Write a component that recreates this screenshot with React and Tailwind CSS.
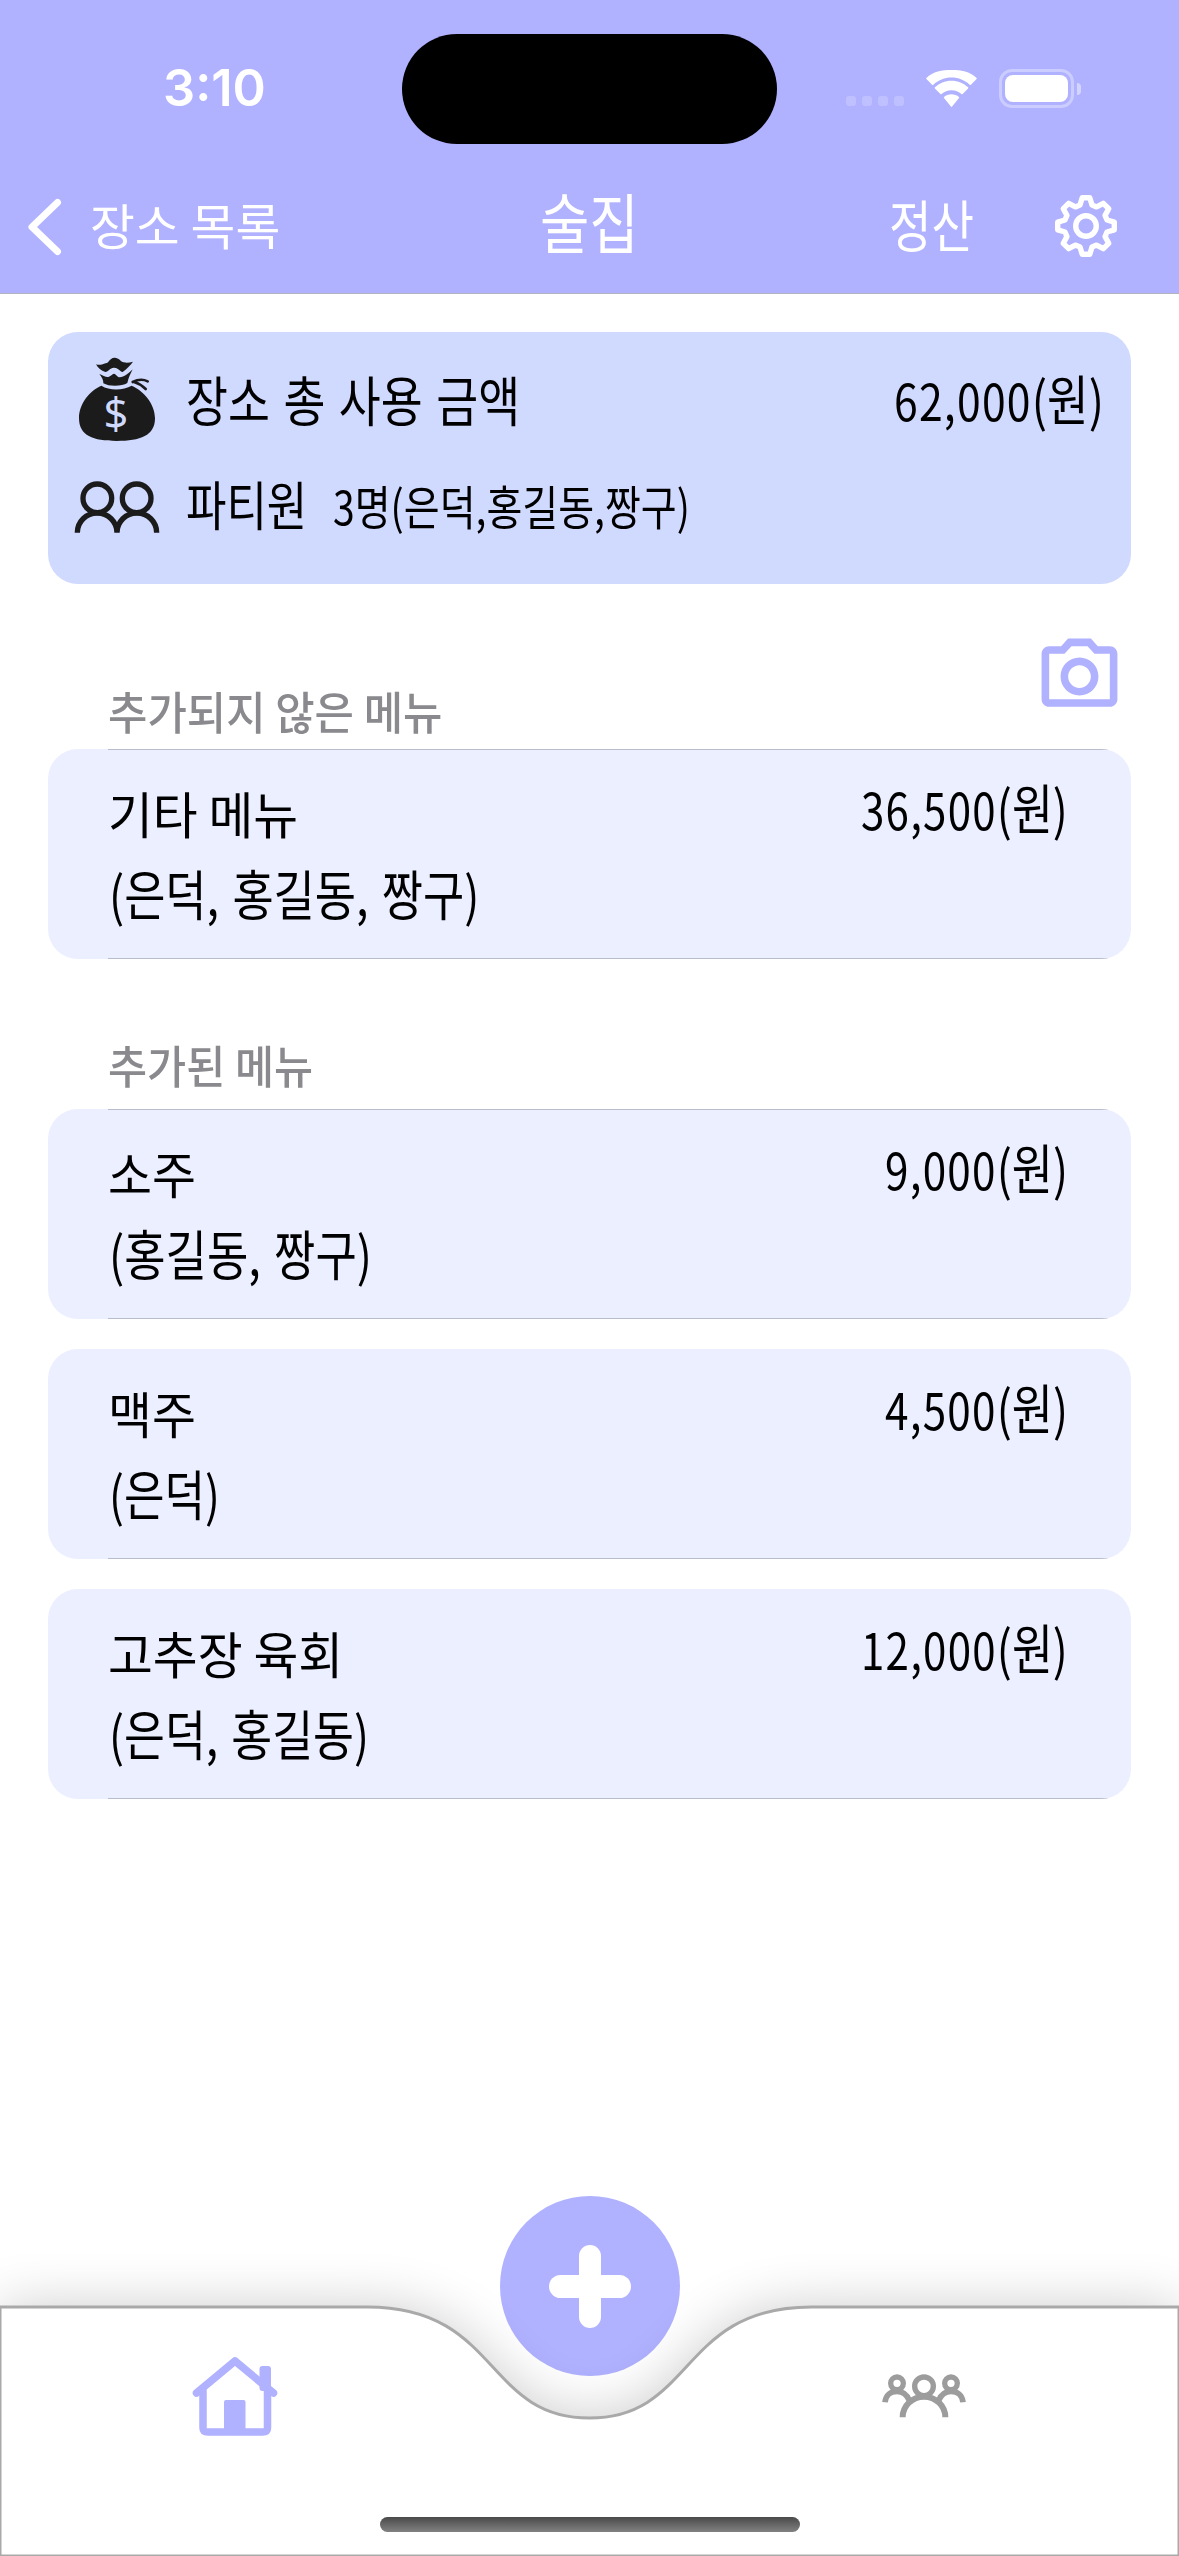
import React, { useLayoutEffect, useRef, useState } from "react";
import { MdOutlineCameraAlt } from "react-icons/md";

// One line of text condensed horizontally so that it fills exactly `width` pixels.
function Condensed({ width, className = "", children }) {
  const ref = useRef(null);
  const [scale, setScale] = useState(1);
  useLayoutEffect(() => {
    setScale(width / ref.current.offsetWidth);
  }, [width]);
  return (
    <span className={"block whitespace-pre shrink-0 " + className} style={{ width }}>
      <span ref={ref} className="inline-block origin-left" style={{ transform: `scaleX(${scale})` }}>
        {children}
      </span>
    </span>
  );
}

function Price({ width, amount, className = "" }) {
  return (
    <Condensed width={width} className={"text-[54px] " + className}>
      <span className="text-[51px] tracking-[1.5px]">{amount}</span>(원)
    </Condensed>
  );
}

function Wifi() {
  return (
    <svg width="51" height="37" viewBox="0 0 51 37" fill="#fff">
      <path d="M25.5 7.6c7 0 13.4 2.7 18.2 7.2.4.3.9.3 1.2 0l5.7-5.800c.3-.3.3-.8 0-1.100C43.900 1.500 35 0 25.500 0S7.100 1.500.4 7.900c-.3.3-.3.8 0 1.100l5.700 5.800c.3.3.8.3 1.200 0C12.100 10.300 18.500 7.600 25.500 7.600z" />
      <path d="M25.500 20.200c3.800 0 7.300 1.400 9.900 3.800.4.3.9.3 1.200 0l5.500-5.600c.3-.3.3-.8 0-1.100-4.400-4.100-10.200-6.600-16.600-6.600s-12.200 2.500-16.600 6.600c-.3.3-.3.8 0 1.100l5.500 5.600c.3.3.8.3 1.200 0 2.600-2.400 6.100-3.800 9.900-3.800z" />
      <path d="M33 28.100c.3-.3.3-.8 0-1.100-2-1.800-4.600-2.800-7.500-2.800s-5.500 1-7.500 2.800c-.3.3-.3.8 0 1.100l6.900 8.500c.3.4.9.4 1.200 0z" />
    </svg>
  );
}

function Gear() {
  const tooth = [[-6, -21], [-3.8, -28.3], [3.8, -28.3], [6, -21]];
  const points = Array.from({ length: 8 }, (_, k) => {
    const a = (k * Math.PI) / 4;
    return tooth
      .map(([x, y]) => `${(x * Math.cos(a) - y * Math.sin(a)).toFixed(2)},${(x * Math.sin(a) + y * Math.cos(a)).toFixed(2)}`)
      .join(" ");
  }).join(" ");
  return (
    <svg width="62" height="62" viewBox="-31 -31 62 62" fill="none" stroke="#fff" strokeWidth="5.4" strokeLinejoin="round">
      <polygon points={points} />
      <circle r="10.3" />
    </svg>
  );
}

function MoneyBag() {
  return (
    <svg width="76" height="84" viewBox="27 21 228 252" fill="#1b1b1b">
      <path d="M94 107C60 122 27 160 27 205c0 52 42 68 113 68s115-16 115-68c0-45-36-83-70-98-24 14-66 16-91 0z" />
      <path d="M78 43c10 4 22-1 32-4 7-2 9-15 23-16 13-1 19 12 28 14 9 2 18 1 28-2-7 10-17 20-31 31-10-3-14-14-27-13-11 1-15 11-25 13-12-3-23-12-28-23z" />
      <path d="M88 72c11 5 19 10 27 9 7-2 12-10 17-10s10 11 17 11c13-1 27-12 39-24-7 14-13 27-16 41-15 10-53 12-72 1 1-10-5-19-12-28z" />
      <path d="M188 96c16-8 31-9 45-2M194 97c14 4 24 11 33 20" fill="none" stroke="#1b1b1b" strokeWidth="8" strokeLinecap="round" />
      <text x="138" y="236" textAnchor="middle" fontSize="130" fontFamily="'Noto Sans', sans-serif" fill="#d0d9fe">$</text>
    </svg>
  );
}

function Pair() {
  return (
    <svg width="86" height="52" viewBox="12 390 258 156" fill="none" stroke="#1b1b1b" strokeWidth="16">
      <circle cx="82" cy="442" r="43" />
      <circle cx="200" cy="442" r="43" />
      <path d="M22 545A59.500 59 0 0 1 141 545A59.500 59 0 0 1 260 545" />
    </svg>
  );
}

function Home() {
  return (
    <svg width="94" height="88" viewBox="188 2353 94 88" fill="none" stroke="#b0b1ff" strokeWidth="7.500" strokeLinejoin="round" strokeLinecap="round">
      <path d="M196.500 2393L235 2361L273.500 2393" />
      <path d="M203 2391V2428Q203 2432 208 2432H262.500Q267.500 2432 267.500 2428V2391" />
      <rect x="259.500" y="2366" width="11.500" height="25" rx="3" fill="#b0b1ff" stroke="none" />
      <rect x="224" y="2400" width="21.500" height="33" rx="2" fill="#b0b1ff" stroke="none" />
    </svg>
  );
}

function Group() {
  return (
    <svg width="90" height="50" viewBox="27 36 270 150" fill="none" stroke="#9c9c9c" strokeWidth="16">
      <circle cx="162" cy="82" r="28" />
      <circle cx="81" cy="73" r="19" />
      <circle cx="243" cy="73" r="19" />
      <path d="M98 175A64 62 0 0 1 226 175" strokeWidth="18" />
      <path d="M45 130C47 108 62 97 81 97C98 97 110 106 118 124" strokeWidth="17" />
      <path d="M279 130C277 108 262 97 243 97C226 97 214 106 206 124" strokeWidth="17" />
    </svg>
  );
}

function SectionTitle({ width, children }) {
  return (
    <h2 className="h-[60px] pl-[60px] text-[45px] leading-[60px] font-medium text-[#8a8a8e]">
      <Condensed width={width}>{children}</Condensed>
    </h2>
  );
}

function MenuCard({ item, first }) {
  return (
    <article className="relative h-[210px] overflow-hidden rounded-[30px] bg-[#ecefff] pl-[60px] pr-[63px] text-black">
      {first && <div className="absolute top-0 right-0 left-[60px] h-px bg-[#b9bccb]" />}
      <div className="flex h-[126px] justify-between pt-[26px] text-[50px] leading-[70px]">
        <Condensed width={item.nameWidth} className="pt-[2px]">{item.name}</Condensed>
        <Price width={item.priceWidth} amount={item.price} className="leading-[64px]" />
      </div>
      <Condensed width={item.peopleWidth} className="-mt-[17px] ml-px text-[54px] leading-[70px] [word-spacing:4px]">{item.people}</Condensed>
      <div className="absolute right-0 bottom-0 left-[60px] h-px bg-[#b9bccb]" />
    </article>
  );
}

const other = { name: "기타 메뉴", nameWidth: 190, price: "36,500", priceWidth: 207, people: "(은덕, 홍길동, 짱구)", peopleWidth: 370 };
const menus = [
  { name: "소주", nameWidth: 88, price: "9,000", priceWidth: 183, people: "(홍길동, 짱구)", peopleWidth: 263 },
  { name: "맥주", nameWidth: 88, price: "4,500", priceWidth: 183, people: "(은덕)", peopleWidth: 111 },
  { name: "고추장 육회", nameWidth: 235, price: "12,000", priceWidth: 207, people: "(은덕, 홍길동)", peopleWidth: 260 },
];

export default function App() {
  return (
    <div className="flex h-[2556px] w-[1179px] flex-col overflow-hidden bg-white font-['Noto_Sans_CJK_KR',sans-serif]">
      <header className="h-[294px] border-b border-[#b3b3bd] bg-[#b0b1ff] text-white">
        <div className="flex h-[177px] items-start pt-[33px]">
          <div className="flex w-[402px] justify-center pt-[24px] pl-[26px] font-['Inter',sans-serif] text-[51px] leading-[62px] font-semibold">
            <Condensed width={103}>3:10</Condensed>
          </div>
          <div className="mt-px h-[110px] w-[375px] rounded-full bg-black" />
          <div className="flex items-center pt-[36px] pl-[69px]">
            <div className="flex gap-[6px] pt-[25px]">
              {[0, 1, 2, 3].map((i) => (
                <span key={i} className="h-[10px] w-[10px] rounded-[3px] bg-white/20" />
              ))}
            </div>
            <div className="ml-[22px]"><Wifi /></div>
            <div className="ml-[22px] h-[39px] w-[75px] rounded-[13px] border-[3px] border-white/35 p-[3px]">
              <div className="h-full w-full rounded-[8px] bg-white" />
            </div>
            <div className="ml-[3px] h-[12px] w-[4px] rounded-r-full bg-white/45" />
          </div>
        </div>
        <div className="flex h-[100px] items-center">
          <svg className="ml-[24px]" width="42" height="62" viewBox="0 0 42 62" fill="none" stroke="#fff" strokeWidth="7" strokeLinecap="round" strokeLinejoin="round">
            <path d="M33.500 6.500L8 31L33.500 55.500" />
          </svg>
          <Condensed width={190} className="-mt-[6px] ml-[24px] text-[49px] leading-[70px]">장소 목록</Condensed>
          <Condensed width={99} className="-mt-[14px] ml-[260px] text-[65px] leading-[90px]">술집</Condensed>
          <Condensed width={85} className="-mt-[8px] ml-[250px] text-[56px] leading-[80px]">정산</Condensed>
          <div className="-mt-[3px] ml-[81px]"><Gear /></div>
        </div>
      </header>

      <main className="flex flex-col px-[48px] pt-[38px]">
        <section className="h-[252px] rounded-[30px] bg-[#d0d9fe] px-[27px] pt-[25px] text-black">
          <div className="flex h-[84px] items-start text-[54px] leading-[84px]">
            <div className="ml-[4px] w-[84px]"><MoneyBag /></div>
            <Condensed width={334} className="ml-[23px] [word-spacing:4px]">장소 총 사용 금액</Condensed>
            <Price width={210} amount="62,000" className="-mt-[1px] ml-auto" />
          </div>
          <div className="flex items-center pt-[26px]">
            <div className="mt-[9px] -ml-px h-[52px] w-[86px]"><Pair /></div>
            <Condensed width={121} className="ml-[26px] text-[53px] leading-[70px]">파티원</Condensed>
            <Condensed width={357} className="ml-[26px] pt-[5px] text-[47px] leading-[66px]">3명(은덕,홍길동,짱구)</Condensed>
          </div>
        </section>

        <div className="flex h-[165px] items-start justify-between">
          <div className="pt-[97px]"><SectionTitle width={334}>추가되지 않은 메뉴</SectionTitle></div>
          <MdOutlineCameraAlt className="mt-[47px] mr-[6px] text-[#b0b1ff]" size={91} />
        </div>
        <MenuCard item={other} first />

        <div className="h-[150px] pt-[76px]"><SectionTitle width={205}>추가된 메뉴</SectionTitle></div>
        <div className="flex flex-col gap-[30px]">
          {menus.map((m, i) => <MenuCard key={m.name} item={m} first={i === 0} />)}
        </div>
      </main>

      <nav className="relative mt-auto h-[249px]">
        <div className="absolute -top-[111px] left-[500px] h-[180px] w-[180px] rounded-full bg-[#b0b1ff]">
          <span className="absolute top-[49px] left-[79px] h-[83px] w-[22px] rounded-full bg-white" />
          <span className="absolute top-[79px] left-[49px] h-[23px] w-[82px] rounded-full bg-white" />
        </div>
        <svg className="absolute -top-[120px] left-0" width="1179" height="369" viewBox="0 -120 1179 369">
          <defs>
            <filter id="bar-shadow" filterUnits="userSpaceOnUse" x="-120" y="-140" width="1420" height="520">
              <feGaussianBlur stdDeviation="28" />
            </filter>
          </defs>
          <path d="M0 0H367.500C499.500 0 484.500 111 589.500 111C694.500 111 679.500 0 811.500 0H1179V249H0Z" fill="#000" opacity=".2" filter="url(#bar-shadow)" />
          <path d="M0 0H367.500C499.500 0 484.500 111 589.500 111C694.500 111 679.500 0 811.500 0H1179V249H0Z" fill="#fff" stroke="#a9a9a9" strokeWidth="3" />
        </svg>
        <div className="relative flex h-full flex-col">
          <div className="flex items-start justify-between pt-[46px] pr-[210px] pl-[188px]">
            <Home />
            <div className="pt-[18px]"><Group /></div>
          </div>
          <div className="mx-auto mt-auto mb-[24px] h-[15px] w-[420px] rounded-full bg-linear-to-b from-[#4a4a4a] to-[#828282]" />
        </div>
      </nav>
    </div>
  );
}
